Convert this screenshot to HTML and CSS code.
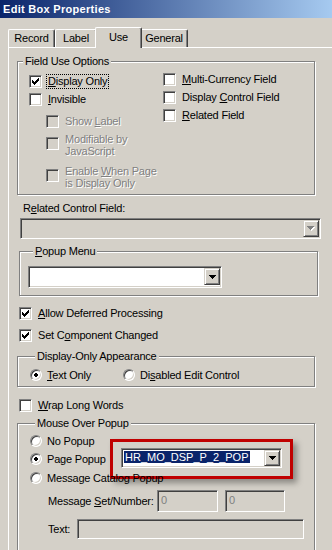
FILE: index.html
```html
<!DOCTYPE html>
<html lang="en">
<head>
    <meta charset="UTF-8">
    <title>Edit Box Properties</title>
    <link rel="stylesheet" href="styles.css">
</head>
<body>
    <div class="titlebar">Edit Box Properties</div>

    <div class="tabs">
        <div class="tab tab-record">Record</div>
        <div class="tab tab-label">Label</div>
        <div class="tab tab-use active">Use</div>
        <div class="tab tab-general">General</div>
    </div>

    <div class="panel">
        <fieldset class="group group-use">
            <legend>Field Use Options</legend>
            <div class="use-cols">
                <div class="col col-left">
                    <div class="check">
                        <span class="box"><svg width="7" height="7" viewBox="0 0 7 7" shape-rendering="crispEdges"><path d="M6 0h1v1h-1z M5 1h2v1h-2z M0 2h1v1h-1z M4 2h3v1h-3z M0 3h2v1h-2z M3 3h3v1h-3z M0 4h5v1h-5z M1 5h3v1h-3z M2 6h1v1h-1z"/></svg></span>
                        <span class="caption focus"><u>D</u>isplay Only</span>
                    </div>
                    <div class="check">
                        <span class="box"></span>
                        <span class="caption"><u>I</u>nvisible</span>
                    </div>
                    <div class="check sub disabled first-sub">
                        <span class="box"></span>
                        <span class="caption">Show <u>L</u>abel</span>
                    </div>
                    <div class="check sub disabled multi">
                        <span class="box"></span>
                        <span class="caption">Modifiable by<br>JavaScript</span>
                    </div>
                    <div class="check sub disabled multi last-sub">
                        <span class="box"></span>
                        <span class="caption">Enable <u>W</u>hen Page<br>is Display Only</span>
                    </div>
                </div>
                <div class="col col-right">
                    <div class="check">
                        <span class="box"></span>
                        <span class="caption"><u>M</u>ulti-Currency Field</span>
                    </div>
                    <div class="check">
                        <span class="box"></span>
                        <span class="caption">Display <u>C</u>ontrol Field</span>
                    </div>
                    <div class="check">
                        <span class="box"></span>
                        <span class="caption"><u>R</u>elated Field</span>
                    </div>
                </div>
            </div>
        </fieldset>

        <div class="field-label">R<u>e</u>lated Control Field:</div>
        <div class="combo combo-related disabled">
            <span class="combo-text"></span>
            <span class="combo-btn"><svg width="8" height="5" viewBox="0 0 8 5" shape-rendering="crispEdges"><path fill="#fff" d="M1 1h7v1h-7z M2 2h5v1h-5z M3 3h3v1h-3z M4 4h1v1h-1z"/><path fill="#808080" d="M0 0h7v1h-7z M1 1h5v1h-5z M2 2h3v1h-3z M3 3h1v1h-1z"/></svg></span>
        </div>

        <fieldset class="group group-popup">
            <legend><u>P</u>opup Menu</legend>
            <div class="combo combo-popup">
                <span class="combo-text"></span>
                <span class="combo-btn"><svg width="7" height="4" viewBox="0 0 7 4" shape-rendering="crispEdges"><path d="M0 0h7v1h-7z M1 1h5v1h-5z M2 2h3v1h-3z M3 3h1v1h-1z"/></svg></span>
            </div>
        </fieldset>

        <div class="check loose check-allow">
            <span class="box"><svg width="7" height="7" viewBox="0 0 7 7" shape-rendering="crispEdges"><path d="M6 0h1v1h-1z M5 1h2v1h-2z M0 2h1v1h-1z M4 2h3v1h-3z M0 3h2v1h-2z M3 3h3v1h-3z M0 4h5v1h-5z M1 5h3v1h-3z M2 6h1v1h-1z"/></svg></span>
            <span class="caption"><u>A</u>llow Deferred Processing</span>
        </div>
        <div class="check loose check-set">
            <span class="box"><svg width="7" height="7" viewBox="0 0 7 7" shape-rendering="crispEdges"><path d="M6 0h1v1h-1z M5 1h2v1h-2z M0 2h1v1h-1z M4 2h3v1h-3z M0 3h2v1h-2z M3 3h3v1h-3z M0 4h5v1h-5z M1 5h3v1h-3z M2 6h1v1h-1z"/></svg></span>
            <span class="caption">Set C<u>o</u>mponent Changed</span>
        </div>

        <fieldset class="group group-appearance">
            <legend>Display-Only Appearance</legend>
            <div class="radio-row">
                <div class="radio radio-text">
                    <span class="dot on"><svg width="4" height="4" viewBox="0 0 4 4" shape-rendering="crispEdges"><path d="M1 0h2v1h-2z M0 1h4v2h-4z M1 3h2v1h-2z"/></svg></span>
                    <span class="caption"><u>T</u>ext Only</span>
                </div>
                <div class="radio">
                    <span class="dot"></span>
                    <span class="caption">Di<u>s</u>abled Edit Control</span>
                </div>
            </div>
        </fieldset>

        <div class="check loose check-wrap">
            <span class="box"></span>
            <span class="caption"><u>W</u>rap Long Words</span>
        </div>

        <fieldset class="group group-mouse">
            <legend>Mouse Over Popup</legend>
            <div class="radio mouse-row first-row">
                <span class="dot"></span>
                <span class="caption">No Popup</span>
            </div>
            <div class="radio mouse-row">
                <span class="dot on"><svg width="4" height="4" viewBox="0 0 4 4" shape-rendering="crispEdges"><path d="M1 0h2v1h-2z M0 1h4v2h-4z M1 3h2v1h-2z"/></svg></span>
                <span class="caption page-caption">Page Popup</span>
                <div class="highlight">
                    <div class="combo combo-page">
                        <span class="combo-text"><span class="selected">HR_MO_DSP_P_2_POP</span></span>
                        <span class="combo-btn"><svg width="7" height="4" viewBox="0 0 7 4" shape-rendering="crispEdges"><path d="M0 0h7v1h-7z M1 1h5v1h-5z M2 2h3v1h-3z M3 3h1v1h-1z"/></svg></span>
                    </div>
                </div>
            </div>
            <div class="radio mouse-row third-row">
                <span class="dot"></span>
                <span class="caption">Message Catalog Popup</span>
            </div>

            <div class="input-row set-row">
                <span class="input-label">Message <u>S</u>et/Number:</span>
                <span class="input input-set">0</span>
                <span class="input input-num">0</span>
            </div>
            <div class="input-row text-row">
                <span class="input-label text-label">Text:</span>
                <span class="input input-text"></span>
            </div>
        </fieldset>
    </div>
</body>
</html>
```

FILE: styles.css
```css
body {
    margin: 0;
    width: 332px;
    height: 550px;
    overflow: hidden;
    background: #d4d0c8;
    font-family: "Liberation Sans", Arial, sans-serif;
    font-size: 11px;
    line-height: 13px;
    letter-spacing: -0.2px;
    color: #000;
}

u {
    text-decoration: underline;
    text-underline-offset: 1px;
}

.titlebar {
    height: 18px;
    line-height: 18px;
    padding-left: 3px;
    color: #fff;
    font-weight: bold;
    letter-spacing: 0.3px;
    background: linear-gradient(to right, #0a246a, #a6caf0);
}

/* tabs */
.tabs {
    display: flex;
    align-items: flex-end;
    height: 20px;
    margin: 9px 0 0 8px;
}

.tab {
    box-sizing: border-box;
    height: 18px;
    padding-top: 2px;
    text-align: center;
    border-left: 1px solid #fff;
    border-top: 1px solid #fff;
    border-right: 1px solid #404040;
    box-shadow: inset -1px 0 0 #808080;
    border-radius: 2px 2px 0 0;
    background: #d4d0c8;
}

.tab-record { width: 47px; }
.tab-label { width: 42px; }
.tab-general { width: 48px; }

.tab.active {
    position: relative;
    z-index: 1;
    width: 47px;
    height: 21px;
    margin: 0 -2px -1px;
    padding-top: 3px;
}

/* panel */
.panel {
    height: 520px;
    margin-left: 8px;
    padding: 7px 0 0 8px;
    border-top: 1px solid #fff;
    border-left: 1px solid #fff;
}

.group {
    box-sizing: border-box;
    width: 298px;
    margin: 0;
    padding: 0;
    border: 1px solid #808080;
    box-shadow: inset 1px 1px 0 #fff, 1px 1px 0 #fff;
}

.group legend {
    margin-left: 5px;
    padding: 0 2px;
    line-height: 13px;
    background: #d4d0c8;
}

/* checkboxes */
.check {
    display: flex;
    align-items: center;
    height: 18px;
}

.box {
    box-sizing: border-box;
    flex: none;
    width: 13px;
    height: 13px;
    padding: 2px 0 0 2px;
    margin-right: 5px;
    background: #fff;
    border: 1px solid;
    border-color: #808080 #fff #fff #808080;
    box-shadow: inset 1px 1px 0 #404040, inset -1px -1px 0 #d4d0c8;
}

.box svg {
    display: block;
}

.caption {
    padding: 0 1px;
    white-space: nowrap;
}

.focus {
    outline: 1px dotted #000;
    outline-offset: 0;
}

.disabled .box {
    background: #d4d0c8;
}

.disabled .caption {
    color: #808080;
    text-shadow: 1px 1px 0 #fff;
}

.use-cols {
    display: grid;
    grid-template-columns: 134px 1fr;
    padding: 2px 0 5px 11px;
}

.col-left {
    padding-top: 2px;
}

.sub {
    padding-left: 17px;
}

.first-sub {
    margin-top: 4px;
}

.multi {
    height: auto;
    align-items: flex-start;
    margin-top: 3px;
    line-height: 12px;
}

.multi .box {
    margin-top: 4px;
}

.last-sub {
    margin-top: 8px;
}

/* combos */
.combo {
    box-sizing: border-box;
    display: flex;
    height: 21px;
    padding: 1px;
    background: #fff;
    border: 1px solid;
    border-color: #808080 #fff #fff #808080;
    box-shadow: inset 1px 1px 0 #404040, inset -1px -1px 0 #d4d0c8;
}

.combo-text {
    flex: 1;
    padding: 1px 0 0 1px;
}

.combo-btn {
    box-sizing: border-box;
    display: flex;
    align-items: center;
    justify-content: center;
    width: 16px;
    height: 17px;
    background: #d4d0c8;
    border: 1px solid;
    border-color: #d4d0c8 #404040 #404040 #d4d0c8;
    box-shadow: inset 1px 1px 0 #fff, inset -1px -1px 0 #808080;
}

.combo.disabled {
    background: #d4d0c8;
}

.field-label {
    margin: 7px 0 0 6px;
}

.combo-related {
    width: 301px;
    margin: 3px 0 0 3px;
}

.group-popup {
    width: 299px;
    margin: 6px 0 0 2px;
    padding: 8px 0 7px 8px;
}

.combo-popup {
    width: 194px;
    height: 22px;
}

.loose {
    margin-left: 2px;
}

.check-allow {
    margin-top: 8px;
}

.check-set {
    margin-top: 4px;
}

/* radios */
.radio {
    display: flex;
    align-items: center;
    height: 18px;
}

.dot {
    box-sizing: border-box;
    flex: none;
    display: flex;
    align-items: center;
    justify-content: center;
    width: 12px;
    height: 12px;
    margin-right: 4px;
    border-radius: 50%;
    background: #fff;
    border: 1px solid;
    border-color: #808080 #fff #fff #808080;
    box-shadow: inset 1px 1px 0 #404040, inset -1px -1px 0 #d4d0c8;
}

.dot svg {
    display: block;
}

.group-appearance {
    margin-top: 6px;
    padding: 3px 0 2px 12px;
}

.radio-text {
    width: 93px;
}

.radio-row {
    display: flex;
}

.check-wrap {
    margin-top: 9px;
}

.group-mouse {
    height: 140px;
    margin-top: 3px;
    padding: 2px 0 0 12px;
}

.page-caption {
    box-sizing: border-box;
    width: 64px;
}

.third-row {
    margin-top: 1px;
}

/* red annotation around the page popup combo */
.highlight {
    box-sizing: border-box;
    width: 183px;
    height: 40px;
    margin: -11px 0;
    padding: 6px 8px 8px;
    border: 3px solid #c00000;
    box-shadow: 4px 4px 6px rgba(0, 0, 0, 0.35);
}

.combo-page {
    width: 161px;
    height: 20px;
}

.combo-page .combo-btn {
    height: 16px;
}

.selected {
    padding: 0 1px;
    color: #fff;
    background: #0a246a;
    letter-spacing: 0;
}

/* text inputs */
.input-row {
    display: flex;
    align-items: center;
    padding-left: 18px;
}

.set-row {
    margin-top: 3px;
}

.text-row {
    margin-top: 7px;
}

.input-label {
    width: 109px;
    white-space: nowrap;
}

.text-label {
    width: 29px;
}

.input {
    box-sizing: border-box;
    height: 22px;
    padding: 3px 0 0 3px;
    color: #808080;
    background: #d4d0c8;
    border: 1px solid;
    border-color: #808080 #fff #fff #808080;
    box-shadow: inset 1px 1px 0 #404040, inset -1px -1px 0 #d4d0c8;
}

.input-set {
    width: 61px;
    margin-right: 7px;
}

.input-num {
    width: 60px;
}

.input-text {
    width: 227px;
    height: 20px;
}
```
